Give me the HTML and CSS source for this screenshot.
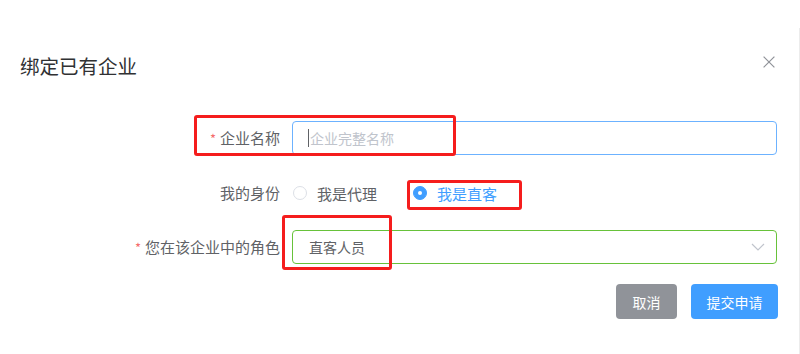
FILE: index.html
```html
<!DOCTYPE html>
<html lang="zh-CN">
<head>
<meta charset="utf-8">
<title>绑定已有企业</title>
<link rel="stylesheet" href="styles.css">
</head>
<body>
<div class="page">
  <div class="dialog">
    <div class="header">
      <span class="title">绑定已有企业</span>
      <button class="close" aria-label="关闭">
        <svg width="12" height="12" viewBox="0 0 12 12"><path d="M0.6 0.6L11.4 11.4M11.4 0.6L0.6 11.4" stroke="#909399" stroke-width="1.2" fill="none"/></svg>
      </button>
    </div>
    <div class="form">
      <div class="row row-1">
        <label class="label"><span class="star">*</span>企业名称</label>
        <div class="control">
          <div class="input focused"><span class="caret"></span><span class="placeholder">企业完整名称</span></div>
        </div>
      </div>
      <div class="row row-2">
        <label class="label">我的身份</label>
        <div class="control radios">
          <span class="radio"><span class="dot"></span><span class="radio-text">我是代理</span></span>
          <span class="radio checked"><span class="dot"></span><span class="radio-text">我是直客</span></span>
        </div>
      </div>
      <div class="row row-3">
        <label class="label"><span class="star">*</span>您在该企业中的角色</label>
        <div class="control">
          <div class="input select"><span class="value">直客人员</span>
            <svg class="chev" width="14" height="8" viewBox="0 0 14 8"><path d="M1 1L7 7L13 1" stroke="#c0c4cc" stroke-width="1.2" fill="none"/></svg>
          </div>
        </div>
      </div>
      <div class="footer">
        <button class="btn btn-cancel">取消</button>
        <button class="btn btn-primary">提交申请</button>
      </div>
    </div>
  </div>
  <div class="mark mark-1"></div>
  <div class="mark mark-2"></div>
  <div class="mark mark-3"></div>
</div>
</body>
</html>
```
FILE: styles.css
```css
* { box-sizing: border-box; }
html, body { margin: 0; padding: 0; background: #fff; }
body {
  font-family: "Noto Sans CJK SC", "Noto Sans", sans-serif;
  color: #606266;
  width: 800px;
  height: 354px;
  overflow: hidden;
}
.page { position: relative; width: 800px; height: 354px; padding-top: 28px; }
.dialog {
  width: 800px;
  height: 326px;
  border-right: 1px solid #ececec;
}
.header {
  position: relative;
  padding: 26px 20px 0 20px;
  height: 50px;
}
.title {
  font-size: 19.5px;
  line-height: 24px;
  color: #303133;
  display: block;
}
.close {
  position: absolute;
  right: 24px;
  top: 28px;
  width: 12px;
  height: 12px;
  padding: 0;
  border: 0;
  background: none;
  display: flex;
}
.form { margin-top: 43px; padding-right: 22px; }
.row { display: flex; align-items: center; height: 34px; }
.row-1 { margin-bottom: 21px; }
.row-2 { margin-bottom: 20px; }
.label {
  width: 292px;
  flex: none;
  padding-right: 12px;
  text-align: right;
  font-size: 15px;
  line-height: 34px;
  color: #606266;
  white-space: nowrap;
}
.star { color: #f56c6c; margin-right: 4px; font-size: 13px; }
.control { flex: 1; display: flex; align-items: center; }
.input {
  width: 100%;
  height: 34px;
  border: 1px solid #dcdfe6;
  border-radius: 4px;
  display: flex;
  align-items: center;
  padding: 0 11px 0 16px;
  font-size: 14px;
}
.input.focused { border-color: #6cb2ff; }
.caret { width: 1px; height: 18px; background: #606266; margin-left: -1px; }
.placeholder { color: #c0c4cc; margin-left: 1px; }
.select { border-color: #67c23a; justify-content: space-between; }
.value { color: #606266; }
.chev { flex: none; }
.radios { height: 34px; }
.radio { display: inline-flex; align-items: center; margin-right: 35px; font-size: 15px; color: #606266; }
.dot {
  width: 14px;
  height: 14px;
  border: 1px solid #dcdfe6;
  border-radius: 50%;
  background: #fff;
  margin-left: 1px;
  position: relative;
}
.radio-text { padding-left: 10px; }
.checked .dot { background: #409eff; border-color: #409eff; }
.checked .dot::after {
  content: "";
  position: absolute;
  width: 4px;
  height: 4px;
  border-radius: 50%;
  background: #fff;
  left: 4px;
  top: 4px;
}
.checked .radio-text { color: #409eff; }
.footer {
  display: flex;
  justify-content: flex-end;
  gap: 14px;
  margin-top: 20px;
  margin-right: -1px;
}
.btn {
  height: 35px;
  border: 0;
  border-radius: 4px;
  font-family: inherit;
  font-size: 14px;
  color: #fff;
  display: flex;
  align-items: center;
  justify-content: center;
  padding: 0;
}
.btn-cancel { background: #909399; width: 61px; }
.btn-primary { background: #409eff; width: 87px; }
.mark {
  position: absolute;
  border: 3px solid #f51d1d;
  border-radius: 3px;
  pointer-events: none;
}
.mark-1 { left: 194px; top: 115px; width: 262px; height: 41px; }
.mark-2 { left: 407px; top: 180px; width: 115px; height: 30px; }
.mark-3 { left: 282px; top: 215px; width: 110px; height: 55px; }
```
